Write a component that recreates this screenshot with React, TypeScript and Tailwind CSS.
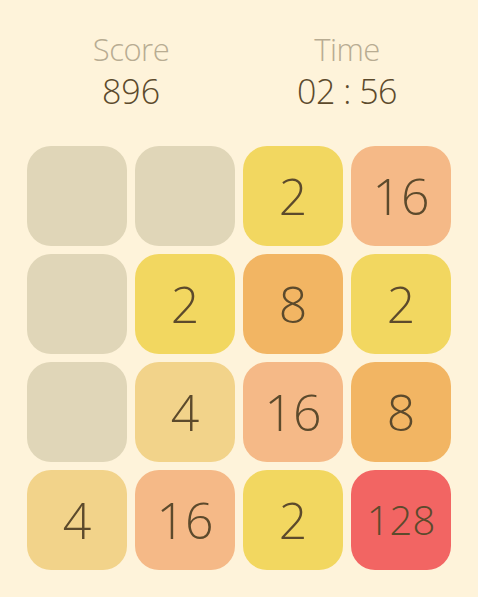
import React from "react";

const colors: Record<string, string> = {
  "0": "bg-[#e0d6b8]",
  "2": "bg-[#f2d760]",
  "4": "bg-[#f2d38a]",
  "8": "bg-[#f2b563]",
  "16": "bg-[#f5b987]",
  "128": "bg-[#f26563]",
};

const grid: (number | null)[][] = [
  [null, null, 2, 16],
  [null, 2, 8, 2],
  [null, 4, 16, 8],
  [4, 16, 2, 128],
];

export default function App() {
  return (
    <div
      className="w-[478px] h-[597px] bg-[#fef3da] px-[27px] overflow-hidden"
      style={{ fontFamily: '"Open Sans", "DejaVu Sans", sans-serif' }}
    >
      <div className="grid grid-cols-2 gap-2 pt-[29px] h-[146px]">
        <div className="flex flex-col items-center">
          <div className="text-[31px] leading-[40px] font-light text-[#b8ac92] tracking-[-0.5px]">Score</div>
          <div className="text-[34px] leading-[40px] font-light text-[#5c4a2c] mt-[2px]">896</div>
        </div>
        <div className="flex flex-col items-center">
          <div className="text-[31px] leading-[40px] font-light text-[#b8ac92] tracking-[-0.5px]">Time</div>
          <div className="text-[34px] leading-[40px] font-light text-[#5c4a2c] mt-[2px] tracking-[-0.5px]">02 : 56</div>
        </div>
      </div>
      <div className="grid grid-cols-4 gap-2">
        {grid.flat().map((v, i) => (
          <div
            key={i}
            className={`h-[100px] rounded-[24px] flex items-center justify-center font-light text-[#5c4a2c] ${
              colors[String(v ?? 0)]
            } ${v !== null && v >= 100 ? "text-[40px]" : "text-[50px]"}`}
          >
            {v ?? ""}
          </div>
        ))}
      </div>
    </div>
  );
}
